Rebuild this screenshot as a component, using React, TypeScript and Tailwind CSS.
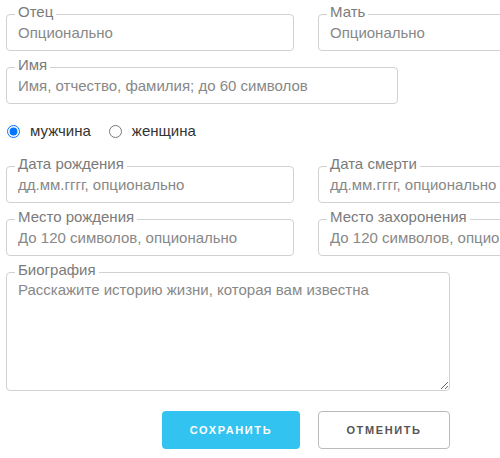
import { useState } from "react";

function Field({ label, placeholder, className = "" }: { label: string; placeholder: string; className?: string }) {
  return (
    <fieldset className={`min-w-0 rounded-[4px] border border-[#d1d1d1] ${className}`}>
      <legend className="ml-[8px] px-[3px] pb-[6px] text-[15px] leading-[11px] text-[#7b7b7b]">{label}</legend>
      <input
        type="text"
        placeholder={placeholder}
        className="block h-[27px] w-full bg-transparent px-[11px] pb-[9px] text-[15px] leading-[18px] text-[#333] outline-none placeholder:text-[#888]"
      />
    </fieldset>
  );
}

export default function App() {
  const [sex, setSex] = useState<"m" | "f">("m");

  return (
    <div className="h-[458px] w-[500px] overflow-hidden bg-white font-['Liberation_Sans',Arial,sans-serif]">
      <div className="flex w-[620px] flex-col gap-2 pl-[6px] pt-[6px]">
        <div className="grid grid-cols-[288px_288px] gap-x-6">
          <Field label="Отец" placeholder="Опционально" />
          <Field label="Мать" placeholder="Опционально" />
        </div>
        <Field label="Имя" placeholder="Имя, отчество, фамилия; до 60 символов" className="w-[392px]" />

        <div className="flex h-[38px] items-center text-[15px] text-[#333]">
          <label className="flex items-center">
            <input type="radio" name="sex" checked={sex === "m"} onChange={() => setSex("m")} className="ml-[1px] h-[13px] w-[13px]" />
            <span className="ml-[10px]">мужчина</span>
          </label>
          <label className="ml-[18px] flex items-center">
            <input type="radio" name="sex" checked={sex === "f"} onChange={() => setSex("f")} className="h-[13px] w-[13px]" />
            <span className="ml-[10px]">женщина</span>
          </label>
        </div>

        <div className="grid grid-cols-[288px_288px] gap-x-6">
          <Field label="Дата рождения" placeholder="дд.мм.гггг, опционально" />
          <Field label="Дата смерти" placeholder="дд.мм.гггг, опционально" />
        </div>
        <div className="grid grid-cols-[288px_288px] gap-x-6">
          <Field label="Место рождения" placeholder="До 120 символов, опционально" />
          <Field label="Место захоронения" placeholder="До 120 символов, опционально" />
        </div>

        <fieldset className="w-[444px] min-w-0 rounded-[4px] border border-[#d1d1d1]">
          <legend className="ml-[8px] px-[3px] pb-[6px] text-[15px] leading-[11px] text-[#7b7b7b]">Биография</legend>
          <textarea
            placeholder="Расскажите историю жизни, которая вам известна"
            className="block h-[109px] w-full bg-transparent px-[11px] text-[15px] leading-[18px] text-[#333] outline-none placeholder:text-[#888]"
          />
        </fieldset>

        <div className="mt-3 flex w-[444px] justify-end gap-[18px]">
          <button
            type="button"
            className="h-[38px] w-[138px] rounded-[4px] bg-[#33c3f0] text-[11px] font-bold uppercase tracking-[1.6px] text-white"
          >
            Сохранить
          </button>
          <button
            type="button"
            className="h-[38px] w-[132px] rounded-[4px] border border-[#bbb] bg-white text-[11px] font-bold uppercase tracking-[1.6px] text-[#555]"
          >
            Отменить
          </button>
        </div>
      </div>
    </div>
  );
}
